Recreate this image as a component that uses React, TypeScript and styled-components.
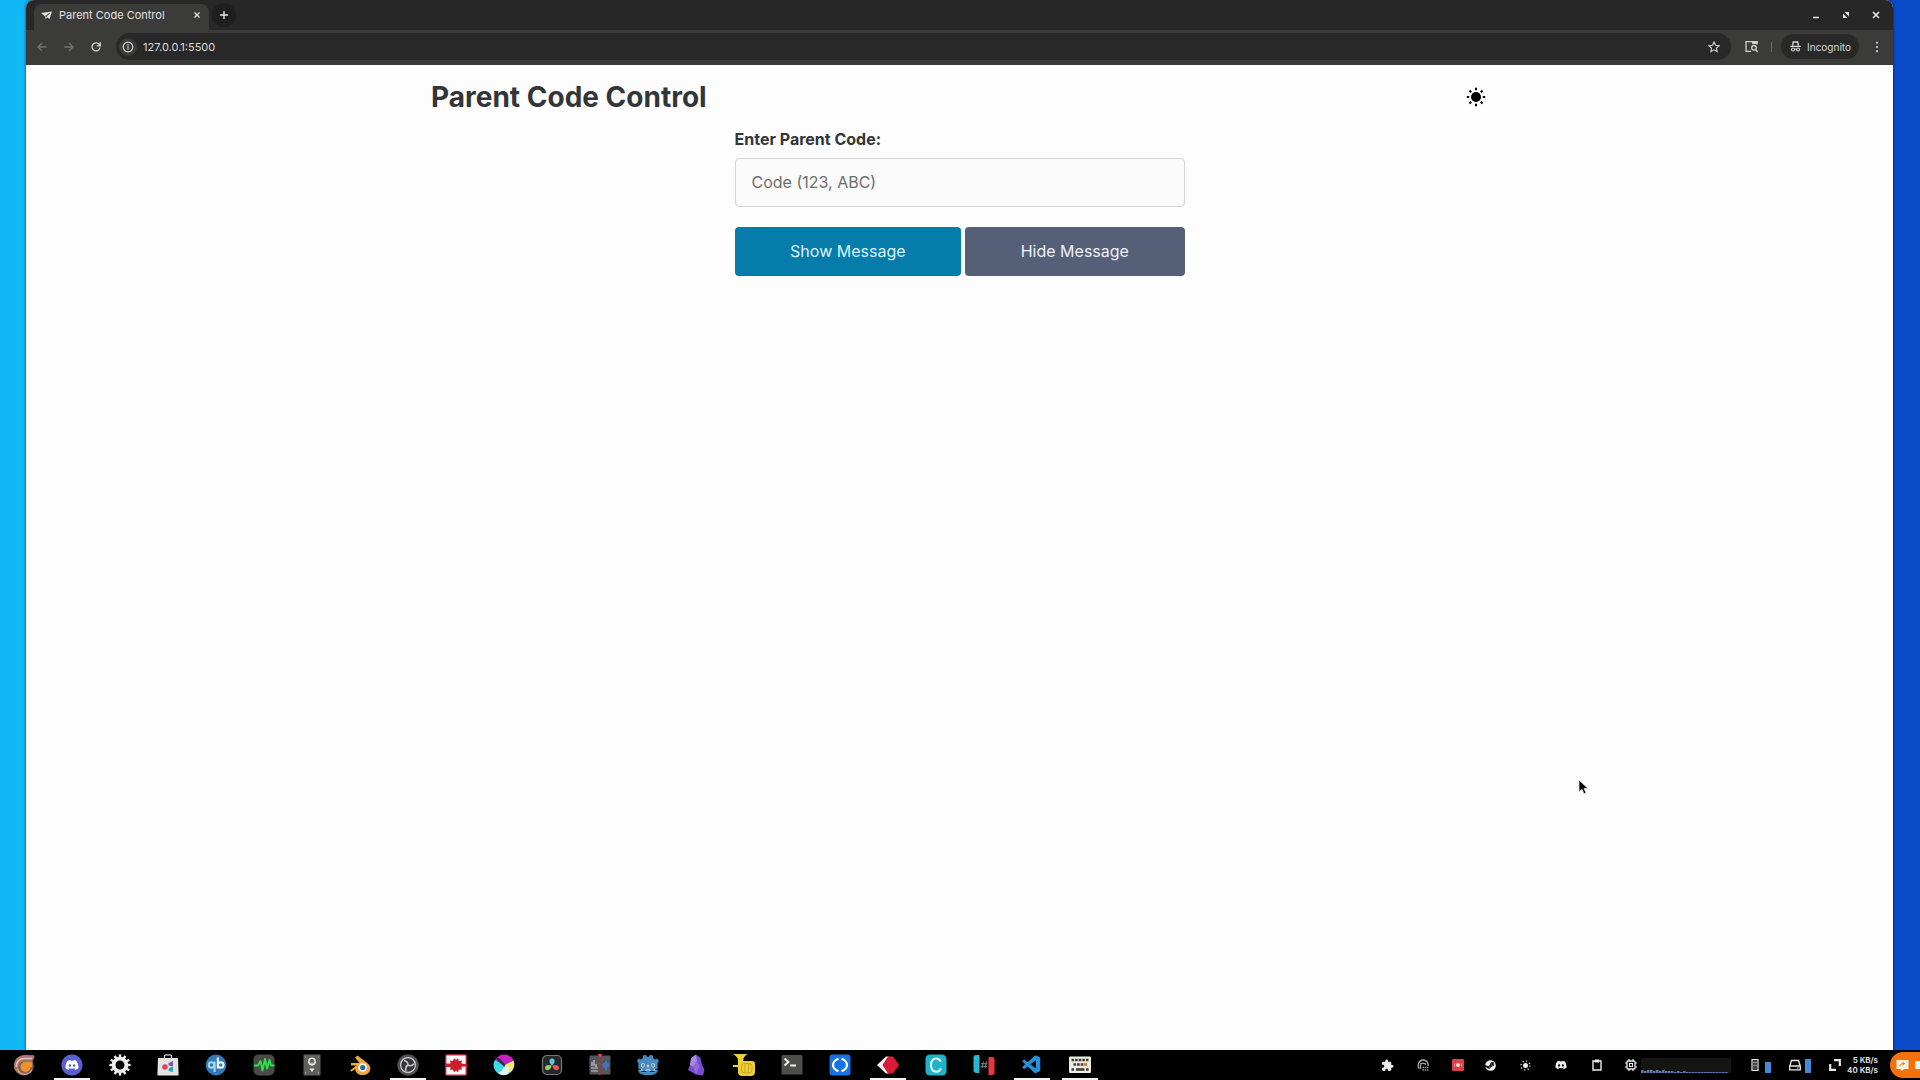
import React, { useState } from "react";
import styled, { createGlobalStyle } from "styled-components";
import { FaDiscord, FaSteam } from "react-icons/fa";
import { MdExtension } from "react-icons/md";
import { SiGodotengine } from "react-icons/si";
import { VscVscode } from "react-icons/vsc";

const GlobalStyle = createGlobalStyle`
  * { box-sizing: border-box; }
  html, body { margin: 0; padding: 0; }
  body { font-family: Inter, Roboto, "Liberation Sans", sans-serif; overflow: hidden; }
  button, input { font-family: inherit; }
  button { border: 0; padding: 0; margin: 0; background: none; cursor: pointer; }
  svg { display: block; flex: none; }
`;

const Desktop = styled.div`
  height: 100vh;
  display: flex;
  flex-direction: column;
  background: linear-gradient(90deg, #12b8f6 0%, #12b8f6 50%, #0a4bca 50%, #0a4bca 100%);
`;

const Workspace = styled.div`
  flex: 1;
  min-height: 0;
  display: flex;
  padding: 0 27px 0 26px;
`;

const BrowserWindow = styled.section`
  flex: 1;
  min-width: 0;
  display: flex;
  flex-direction: column;
  background: #fdfdfd;
  border-radius: 8px 8px 0 0;
  box-shadow: 0 0 3px rgba(0, 0, 0, 0.7);
  overflow: hidden;
`;

const TabStrip = styled.div`
  height: 30px;
  display: flex;
  align-items: flex-end;
  padding-left: 8px;
  background: #272727;
`;

const Tab = styled.div`
  width: 175px;
  height: 26px;
  display: flex;
  align-items: center;
  padding: 0 5px 4px 7px;
  gap: 7px;
  border-radius: 8px 8px 0 0;
  background: #3b3b3a;
  color: #e2e2e2;
  font-size: 11px;
`;

const TabTitle = styled.span`
  flex: 1;
  white-space: nowrap;
`;

const StripButton = styled.button`
  width: 24px;
  height: 24px;
  display: grid;
  place-items: center;
  color: #e6e6e6;
`;

const CloseTab = styled(StripButton)`
  width: 14px;
  height: 14px;
`;

const NewTab = styled(StripButton)`
  margin: 0 0 3px 3px;
  border-radius: 12px;
  background: #1f1f1f;
`;

const WindowControls = styled.div`
  display: flex;
  gap: 6px;
  margin: 0 5px 3px auto;
`;

const Toolbar = styled.div`
  height: 35px;
  display: flex;
  align-items: center;
  gap: 4px;
  padding: 0 5px 2px 4px;
  background: #3b3b3a;
`;

const ToolButton = styled.button`
  width: 23px;
  height: 24px;
  display: grid;
  place-items: center;
  color: ${(p: { $dim?: boolean }) => (p.$dim ? "#737373" : "#d0d0d0")};
`;

const AddressBar = styled.div`
  flex: 1;
  height: 27px;
  display: flex;
  align-items: center;
  gap: 6px;
  margin: 0 5px;
  padding: 0 6px 0 3px;
  border-radius: 14px;
  background: #282828;
`;

const SiteInfo = styled.button`
  width: 18px;
  height: 18px;
  display: grid;
  place-items: center;
  border-radius: 9px;
  background: #3b3b3a;
  color: #d8d8d8;
`;

const AddressInput = styled.input`
  flex: 1;
  padding: 0;
  border: 0;
  outline: 0;
  background: none;
  color: #dcdcdc;
  font-size: 11px;
`;

const Divider = styled.span`
  width: 1px;
  height: 10px;
  margin: 0 5px 0 4px;
  background: #6b6b6b;
`;

const IncognitoChip = styled.button`
  height: 25px;
  display: flex;
  align-items: center;
  gap: 6px;
  margin-right: 2px;
  padding: 0 8px 0 9px;
  border-radius: 13px;
  background: #282828;
  color: #d8d8d8;
  font-size: 10px;
`;

const Page = styled.main`
  flex: 1;
  padding: 14px 24px;
  color: #333639;
`;

const PageHeader = styled.header`
  max-width: 1057px;
  margin: 0 auto;
  display: flex;
  align-items: center;
  justify-content: space-between;
`;

const Title = styled.h1`
  margin: 0;
  font-size: 28px;
  line-height: 36px;
  font-weight: 700;
`;

const ThemeToggle = styled.button`
  width: 24px;
  height: 24px;
  display: grid;
  place-items: center;
  color: #000;
`;

const CodeForm = styled.form`
  max-width: 450px;
  margin: 12px auto 0;
  display: flex;
  flex-direction: column;
`;

const FieldLabel = styled.label`
  font-size: 16px;
  line-height: 24px;
  font-weight: 700;
`;

const CodeField = styled.input`
  height: 49px;
  margin: 7px 0 20px;
  padding: 0 16px 2px;
  border: 1px solid #d5d5d2;
  border-radius: 4px;
  background: #fafafb;
  color: #333639;
  font-size: 16px;
  &::placeholder { color: #6c6f6c; opacity: 1; }
`;

const ButtonRow = styled.div`
  display: flex;
  gap: 4px;
`;

const ActionButton = styled.button`
  flex: 1 1 auto;
  height: 49px;
  padding-bottom: 2px;
  border-radius: 4px;
  background: ${(p: { $secondary?: boolean }) => (p.$secondary ? "#555f78" : "#067caa")};
  color: ${(p: { $secondary?: boolean }) => (p.$secondary ? "#eeeff6" : "#dcf4fc")};
  font-size: 16px;
`;

const Taskbar = styled.footer`
  height: 30px;
  display: flex;
  background: #000;
  color: #e8e8e8;
  overflow: hidden;
`;

const AppButton = styled.button`
  width: 48px;
  height: 30px;
  display: flex;
  flex-direction: column;
  align-items: center;
  justify-content: space-between;
  padding-top: 4px;
  flex: none;
  &::after {
    content: "";
    width: 36px;
    height: 2px;
    background: ${(p: { $running?: boolean }) => (p.$running ? "#f4f4f4" : "transparent")};
  }
`;

const Tray = styled.div`
  margin-left: auto;
  display: flex;
  align-items: center;
`;

const TrayButton = styled.button`
  width: ${(p: { $wide?: boolean }) => (p.$wide ? "36px" : "33px")};
  height: 30px;
  display: grid;
  place-items: center;
  color: #ececec;
`;

const CpuButton = styled(TrayButton)`
  width: 20px;
  margin-left: 6px;
`;

const Meter = styled.div`
  display: flex;
  align-items: center;
  gap: 4px;
  margin-left: 18px;
`;

const MeterTrack = styled.span`
  width: 6px;
  height: 15px;
  display: flex;
  align-items: flex-end;
`;

const MeterFill = styled.span`
  width: 100%;
  background: #4489d6;
`;

const NetSpeed = styled.div`
  width: 33px;
  margin-right: 12px;
  text-align: right;
  font-size: 8px;
  line-height: 10px;
  font-weight: 600;
  white-space: nowrap;
`;

const NotifyPill = styled.button`
  width: 30px;
  height: 26px;
  display: flex;
  align-items: center;
  gap: 6px;
  padding-left: 6px;
  border-radius: 13px 0 0 13px;
  background: #f4720b;
  overflow: hidden;
`;

const Pointer = styled.svg`
  position: absolute;
  left: 1578px;
  top: 779px;
`;

const Icon = ({ size = 22, box = 22, children }: { size?: number; box?: number; children: React.ReactNode }) => (
  <svg width={size} height={size} viewBox={`0 0 ${box} ${box}`} fill="none" aria-hidden="true">
    {children}
  </svg>
);

const gearTeeth = Array.from({ length: 12 }, (_, i) => (
  <rect key={i} x="9.8" y="0.4" width="2.4" height="4" fill="#efefea" transform={`rotate(${(i * 360) / 12} 11 11)`} />
));

type AppEntry = { name: string; running?: boolean; art: React.ReactNode };

const apps: AppEntry[] = [
  {
    name: "Launcher",
    art: (
      <Icon>
        <circle cx="10.800" cy="11.400" r="10" fill="#8a5f52" />
        <path d="M1 12C1 5.500 6 1 12 1l9.500.3c0 4-1.500 6-4.500 6.200H10c-3 .5-5 2.500-5 5.500 0 3 1 5 3 7-4-1-7-4.200-7-8Z" fill="#a8776a" />
        <path d="M3.500 13C3 7.500 7 4.500 11 4.500h8" stroke="#e6c0b0" strokeWidth="1.500" />
        <path d="M4.500 15c1 3 3.500 5 7 5.200 3.500 0 6-1.700 7.500-4.200" stroke="#d8a890" strokeWidth="1.200" />
        <circle cx="12.500" cy="13" r="5" fill="#f0902a" />
        <path d="M12 8h7v5h-5Z" fill="#f0902a" />
      </Icon>
    ),
  },
  {
    name: "Discord",
    running: true,
    art: (
      <Icon>
        <circle cx="11" cy="11" r="10.600" fill="#5b5fd0" />
        <g transform="translate(4 4)"><FaDiscord size={14} color="#fff" /></g>
      </Icon>
    ),
  },
  {
    name: "Settings",
    art: (
      <Icon>
        {gearTeeth}
        <circle cx="11" cy="11" r="6.400" stroke="#efefea" strokeWidth="3.800" />
      </Icon>
    ),
  },
  {
    name: "Software",
    art: (
      <Icon>
        <path d="M7.500 5V2.200c0-1 .5-1.400 1.300-1.400h4.400c.8 0 1.300.4 1.300 1.400V5" stroke="#deded8" strokeWidth="1.300" />
        <path d="M1 4h20l.6 16.500c0 .6-.4 1-1 1H1.400c-.6 0-1-.4-1-1Z" fill="#e6e2e2" />
        <circle cx="8" cy="13" r="2.800" fill="#d94a5c" />
        <path d="m11.500 9 4.500-2v5.500l-4.500-1Z" fill="#7b59b8" />
        <path d="m12 14 4-1.500v5.500l-4.500-1Z" fill="#28a6b4" />
      </Icon>
    ),
  },
  {
    name: "qBittorrent",
    art: (
      <Icon>
        <circle cx="11" cy="11" r="10.400" fill="#3478b8" />
        <circle cx="6.500" cy="11" r="2.800" stroke="#a5d8f4" strokeWidth="2" />
        <path d="M9.600 7.500v10.500" stroke="#a5d8f4" strokeWidth="2" />
        <circle cx="15.700" cy="11" r="2.800" stroke="#f0f8ff" strokeWidth="2" />
        <path d="M12.800 3.500v11" stroke="#f0f8ff" strokeWidth="2" />
      </Icon>
    ),
  },
  {
    name: "System Monitor",
    art: (
      <Icon>
        <rect x=".5" y=".5" width="21" height="21" rx="5" fill="#4a4a46" />
        <path d="M1 11.500h4L7.500 7l2 9.500L12 5l2 9.500L16.500 6l1.500 5.500h3.500" stroke="#2be04e" strokeWidth="1.900" strokeLinejoin="round" />
      </Icon>
    ),
  },
  {
    name: "Audio Device",
    art: (
      <Icon>
        <rect x="2.500" y=".5" width="17" height="21" fill="#5e5e5a" />
        <circle cx="11" cy="7.500" r="3.200" stroke="#e5e5e5" strokeWidth="1.500" />
        <path d="M11 8v4" stroke="#ddd" />
        <path d="m8.500 14.500 5 0-2.500 3.500Z" fill="#f2f2f2" />
        <path d="M4 3h1M17 3h1M4 19h1M17 19h1" stroke="#aaa" />
      </Icon>
    ),
  },
  {
    name: "Blender",
    art: (
      <Icon>
        <path d="M1 16.500 7.500 11.500H2V9h8.500L6 3.500 8.500 1.500l10 7.700c3 2.500 3.800 5.500 1.900 8.500-2 3-7.300 4.500-11 2.500-2-1-3.300-3-3.100-5.300L2.500 17.500Z" fill="#eda83c" />
        <circle cx="13.700" cy="13.500" r="4.400" fill="#f7f4ea" />
        <circle cx="13.700" cy="13.500" r="2.600" fill="#2867ad" />
      </Icon>
    ),
  },
  {
    name: "OBS Studio",
    running: true,
    art: (
      <Icon>
        <circle cx="11" cy="11" r="10.700" fill="#505052" />
        <circle cx="11" cy="11" r="7.400" fill="#37373a" stroke="#d4d4d4" strokeWidth="1.200" />
        {[0, 120, 240].map((a) => (
          <path key={a} d="M11 11C11 8.500 9.500 7 7 6.500" stroke="#cfcfcf" strokeWidth="1.500" transform={`rotate(${a} 11 11)`} />
        ))}
      </Icon>
    ),
  },
  {
    name: "Puzzle",
    art: (
      <Icon>
        <rect x=".8" y=".8" width="20.400" height="20.400" rx="1" fill="#fff" stroke="#c91c2c" strokeWidth="1.200" />
        <path d="M1 9.500h4.500L5 6.500l3 .5 1-3 2 2 2-2 .8 3 3.200-.5-.5 3 4.500.5v2.500l-4.500.3.500 3-3.200-.3-.8 3-2-2-2 2-1-3-3 .5.500-3H1Z" fill="#cc1d2d" />
      </Icon>
    ),
  },
  {
    name: "Krita",
    art: (
      <Icon>
        <path d="M11 11 2 6C4 2.500 7.300.5 11 .5c4.500 0 8 2.500 9.600 6Z" fill="#c71fc0" />
        <path d="m11 11 9.600-4.500c2 5-.4 10-3.600 12.500Z" fill="#f2eb68" />
        <path d="M11 11 17 19c-6 4.500-16 1.500-16.500-8C.5 9 1 7.500 2 6Z" fill="#3ddce8" />
        <path d="M5 19c5-2 5-7 9-6.500 3 .5 3 4.500 1 7.500-3 1.800-7 1.500-10-1Z" fill="#e8f8fa" />
        <path d="M1 2c4 1 8 4 11.500 9L11 12.500C7 9 4 6 1 2Z" fill="#2a3040" />
      </Icon>
    ),
  },
  {
    name: "DaVinci Resolve",
    art: (
      <Icon>
        <rect x="1.500" y="1.500" width="19" height="19" rx="4.500" fill="#25292c" stroke="#777" strokeWidth="1.200" />
        <path d="M11 11.500C7.500 9 7.500 5 11 4.300c3.500.7 3.500 4.700 0 7.200Z" fill="#58c8d8" />
        <path d="M10.600 11.600c-.4 4.400-4.400 6-6.400 3.400-1-3.300 2.500-5 6.400-3.400Z" fill="#9bd05a" />
        <path d="M11.400 11.600c.4 4.400 4.400 6 6.400 3.400 1-3.300-2.500-5-6.400-3.400Z" fill="#e8555a" />
      </Icon>
    ),
  },
  {
    name: "Audio Editor",
    art: (
      <Icon>
        <rect x=".5" y="1.500" width="21" height="19" rx="1" fill="#55565c" />
        <path d="M2 14h7M2 17h7M3 8v4M5 6v6M7 10v3" stroke="#c0c4cc" strokeWidth="1.200" />
        <path d="M11 0v21" stroke="#a63438" strokeWidth="1.500" />
        <path d="M8.500 0h5L11 3.500Z" fill="#e04a44" />
        <path d="M13 11h1M15 9v5M17 7v9M19 9v4" stroke="#3c78c8" strokeWidth="1.700" />
      </Icon>
    ),
  },
  { name: "Godot", art: <Icon><rect x="4" y="9" width="14" height="8" fill="#e8f4fa" /><SiGodotengine size={22} color="#478cbf" /></Icon> },
  {
    name: "Obsidian",
    art: (
      <Icon>
        <path d="M11 .5 6 4.500 5 11l-2 5 8 4.500 7 1 1.500-6-2.500-4.500L15.500 4Z" fill="#7a4bd0" />
        <path d="M11 .5 6 4.500 5 11l3 2 4-6Z" fill="#a68be0" />
        <path d="m12 7 2.500 5-3.500 8.500-3-7.500Z" fill="#8f6ade" />
      </Icon>
    ),
  },
  {
    name: "Horn",
    art: (
      <Icon>
        <path d="M0 0h14.500c-3 2-4.500 4-4.500 7h9c2 0 3 1 3 3v8c0 3-2 4-4 4H9c-3 0-4-2-4-4v-5H0v-2h5V6C5 3.500 2.500 1.500 0 0Z" fill="#ead036" />
        <rect x="8.500" y="9.500" width="10.500" height="9.500" rx="3" stroke="#c4a51c" />
        <path d="M12 10v9M15.500 10v9" stroke="#c4a51c" />
      </Icon>
    ),
  },
  {
    name: "Terminal",
    art: (
      <Icon>
        <rect x=".5" y="1" width="21" height="19.500" rx="1.500" fill="#4d4d4c" />
        <path d="m3.500 4.500 4 3.500-4 3.500M9 11.500h6" stroke="#f4f4f4" strokeWidth="1.800" />
      </Icon>
    ),
  },
  {
    name: "Code Brackets",
    art: (
      <Icon>
        <rect x=".5" y=".5" width="21" height="21" rx="3" fill="#1673e0" />
        <path d="M9.500 4.800C6 6 4 8.500 4 11s2 5 5.500 6.200M12.500 4.800C16 6 18 8.500 18 11s-2 5-5.500 6.200" stroke="#fff" strokeWidth="2.200" />
      </Icon>
    ),
  },
  {
    name: "Red Diamond",
    running: true,
    art: (
      <Icon>
        <path d="m9 2.500-9 8.500 9 8.500h3l-6-8.500 6-8.500Z" fill="#f6f2f2" />
        <path d="M11 2.500h5l6 8.500-6 8.500h-5L5.500 11Z" fill="#d81c36" />
      </Icon>
    ),
  },
  {
    name: "C Editor",
    art: (
      <Icon>
        <rect x=".5" y=".5" width="21" height="21" rx="4.500" fill="#20b2c8" />
        <path d="M15.800 7.500C14.800 5.400 13.300 4.400 11.300 4.400c-3.300 0-5.300 2.700-5.300 6.700 0 4 2 6.600 5.300 6.600 2.200 0 3.800-1.200 4.500-3.300" stroke="#eafafa" strokeWidth="2" />
      </Icon>
    ),
  },
  {
    name: "Hash",
    art: (
      <Icon>
        <path d="M6.500 1v18H3.500C1.500 19 .5 18 .5 16.500V3.500C.5 2 1.500 1 3 1Z" fill="#28b6cc" />
        <path d="M15.500 3H19c1.500 0 2.500 1 2.500 2.500v13c0 1.500-1 2.500-2.500 2.500h-3.500Z" fill="#e8383e" />
        <path d="m10.500 7.500-1.500 7M13.500 7.500 12 14.500M8 9.700h6.500M7.500 12.300H14" stroke="#8c8c8c" strokeWidth=".9" />
      </Icon>
    ),
  },
  { name: "Visual Studio Code", running: true, art: <VscVscode size={22} color="#2492d8" /> },
  {
    name: "On-screen Keyboard",
    running: true,
    art: (
      <Icon>
        <rect x="0" y="2.500" width="22" height="16.500" rx="1" fill="#efece2" />
        <path d="M2.500 6h17M4.500 10.500h14M2.500 15.500h3M17 15.500h3" stroke="#403d3a" strokeWidth="2.600" strokeDasharray="2.600 1" />
        <path d="M7 15.500h8.500" stroke="#403d3a" strokeWidth="2.600" />
        <rect x="14.500" y="9" width="3" height="3" fill="#e9862e" />
      </Icon>
    ),
  },
];

const cpuHistory = [3, 2, 3, 3, 2, 3, 2, 3, 2, 2, 2, 1, 2, 1, 2, 1, 1, 1, 1, 1, 1, 1, 1, 1, 1, 1, 1, 1, 1];

export default function App() {
  const [code, setCode] = useState("");
  return (
    <Desktop>
      <GlobalStyle />
      <Workspace>
        <BrowserWindow>
          <TabStrip>
            <Tab>
              <Icon size={11} box={11}>
                <path d="M0 3 11 1.500 8.500 9 6 7.300 4.700 9.300 4 6.300Z" fill="currentColor" />
                <path d="M4 6.300 8.500 3.300 4.700 7.500" stroke="#3b3b3a" strokeWidth=".7" />
              </Icon>
              <TabTitle>Parent Code Control</TabTitle>
              <CloseTab aria-label="Close tab">
                <Icon size={8} box={8}><path d="m1.500 1.500 5 5m0-5-5 5" stroke="currentColor" strokeWidth="1.300" /></Icon>
              </CloseTab>
            </Tab>
            <NewTab aria-label="New tab">
              <Icon size={10} box={10}><path d="M5 1v8M1 5h8" stroke="currentColor" strokeWidth="1.400" /></Icon>
            </NewTab>
            <WindowControls>
              <StripButton aria-label="Minimize">
                <Icon size={8} box={8}><path d="M1 6.500h6" stroke="currentColor" strokeWidth="1.500" /></Icon>
              </StripButton>
              <StripButton aria-label="Restore">
                <Icon size={8} box={8}><path d="M2.500 1H7v4.500L2.500 1ZM1 2.500 5.500 7H1V2.500Z" fill="currentColor" /></Icon>
              </StripButton>
              <StripButton aria-label="Close">
                <Icon size={8} box={8}><path d="m1 1 6 6m0-6L1 7" stroke="currentColor" strokeWidth="1.700" /></Icon>
              </StripButton>
            </WindowControls>
          </TabStrip>
          <Toolbar>
            <ToolButton $dim aria-label="Back">
              <Icon size={10} box={10}><path d="M9.500 5H1m4-4L1 5l4 4" stroke="currentColor" strokeWidth="1.300" /></Icon>
            </ToolButton>
            <ToolButton $dim aria-label="Forward">
              <Icon size={10} box={10}><path d="M.5 5H9M5 1l4 4-4 4" stroke="currentColor" strokeWidth="1.300" /></Icon>
            </ToolButton>
            <ToolButton aria-label="Reload">
              <Icon size={10} box={10}><path d="M9 5.500A4 4 0 1 1 8 2.200L9 3.300M9.300.3v3.500H5.800" stroke="currentColor" strokeWidth="1.300" /></Icon>
            </ToolButton>
            <AddressBar>
              <SiteInfo aria-label="Site information">
                <Icon size={12} box={12}>
                  <circle cx="6" cy="6" r="4.800" stroke="currentColor" strokeWidth="1.200" />
                  <path d="M6 5.300v3.200M6 3.200v1.200" stroke="currentColor" strokeWidth="1.200" />
                </Icon>
              </SiteInfo>
              <AddressInput aria-label="Address" defaultValue="127.0.0.1:5500" />
              <ToolButton aria-label="Bookmark">
                <Icon size={12} box={12}><path d="m6 1 1.500 3.300 3.700.4-2.800 2.400.8 3.600L6 8.800l-3.200 1.900.8-3.600L.8 4.700l3.700-.4L6 1Z" stroke="currentColor" strokeWidth="1.100" /></Icon>
              </ToolButton>
            </AddressBar>
            <ToolButton aria-label="Search side panel">
              <Icon size={13} box={13}>
                <path d="M6 11.400H1V1.600h11v3" stroke="currentColor" strokeWidth="1.300" />
                <path d="M7 1h5.500v3H7Z" fill="currentColor" />
                <circle cx="9" cy="7.800" r="2.300" stroke="currentColor" strokeWidth="1.300" />
                <path d="m10.500 9.500 2.200 2.500" stroke="currentColor" strokeWidth="1.300" />
              </Icon>
            </ToolButton>
            <Divider />
            <IncognitoChip>
              <Icon size={11} box={11}>
                <path d="M2.500 4.500 3.300 1h4.400l.8 3.500M.3 5.400h10.400" stroke="currentColor" strokeWidth="1.300" />
                <circle cx="3" cy="8.500" r="1.500" stroke="currentColor" strokeWidth="1.100" />
                <circle cx="8" cy="8.500" r="1.500" stroke="currentColor" strokeWidth="1.100" />
                <path d="M4.500 8.200h2" stroke="currentColor" />
              </Icon>
              Incognito
            </IncognitoChip>
            <ToolButton aria-label="Menu">
              <Icon size={12} box={12}>
                <circle cx="6" cy="1.800" r="1.100" fill="currentColor" />
                <circle cx="6" cy="6" r="1.100" fill="currentColor" />
                <circle cx="6" cy="10.200" r="1.100" fill="currentColor" />
              </Icon>
            </ToolButton>
          </Toolbar>
          <Page>
            <PageHeader>
              <Title>Parent Code Control</Title>
              <ThemeToggle aria-label="Toggle theme">
                <Icon size={20} box={20}>
                  <circle cx="10" cy="10" r="5" fill="currentColor" />
                  {[0, 45, 90, 135, 180, 225, 270, 315].map((a) => (
                    <path key={a} d="M10 .8v2.400" stroke="currentColor" strokeWidth="2" transform={`rotate(${a} 10 10)`} />
                  ))}
                </Icon>
              </ThemeToggle>
            </PageHeader>
            <CodeForm onSubmit={(e) => e.preventDefault()}>
              <FieldLabel htmlFor="parent-code">Enter Parent Code:</FieldLabel>
              <CodeField id="parent-code" placeholder="Code (123, ABC)" value={code} onChange={(e) => setCode(e.target.value)} />
              <ButtonRow>
                <ActionButton type="submit">Show Message</ActionButton>
                <ActionButton type="button" $secondary>Hide Message</ActionButton>
              </ButtonRow>
            </CodeForm>
          </Page>
        </BrowserWindow>
      </Workspace>
      <Taskbar>
        {apps.map((app) => (
          <AppButton key={app.name} aria-label={app.name} $running={app.running}>{app.art}</AppButton>
        ))}
        <Tray>
          <TrayButton $wide aria-label="Extensions"><MdExtension size={13} /></TrayButton>
          <TrayButton $wide aria-label="Headset">
            <Icon size={12} box={12}>
              <path d="M2 9.500C0 6 2 1 6 1s5.500 3 5 6M3.500 6v4M3 5.500C4.500 4 7.500 4 9 5.500" stroke="#aaa" strokeWidth="1.300" />
              <path d="M5.500 8.500h6M5.500 11h6" stroke="#8f97bb" strokeDasharray="1.500 .7" strokeWidth="1.500" />
            </Icon>
          </TrayButton>
          <TrayButton aria-label="Recorder">
            <Icon size={12} box={12}>
              <rect width="12" height="12" rx="1" fill="#dc4049" />
              <circle cx="6" cy="6" r="2" fill="#ffe0dc" />
              <path d="M2.500 4.500v3M9.500 4.500v3" stroke="#f0a0a0" />
            </Icon>
          </TrayButton>
          <TrayButton aria-label="Steam"><FaSteam size={11} /></TrayButton>
          <TrayButton $wide aria-label="Brightness">
            <Icon size={11} box={11}>
              <circle cx="5.500" cy="5.500" r="2.500" fill="currentColor" />
              <circle cx="5.500" cy="5.500" r="4.500" stroke="currentColor" strokeDasharray="1.200 2.330" strokeWidth="1.200" />
            </Icon>
          </TrayButton>
          <TrayButton $wide aria-label="Discord status"><FaDiscord size={12} /></TrayButton>
          <TrayButton $wide aria-label="Clipboard">
            <Icon size={12} box={12}>
              <path d="M2 2h8v9H2Z" stroke="currentColor" strokeWidth="1.400" />
              <path d="M4 .5h4v3H4Z" fill="currentColor" />
            </Icon>
          </TrayButton>
          <CpuButton aria-label="Processor">
            <Icon size={12} box={12}>
              <rect x="2" y="2" width="8" height="8" rx="1" stroke="currentColor" strokeWidth="1.300" />
              <rect x="4.500" y="4.500" width="3" height="3" stroke="currentColor" />
              <path d="M4 0v2M8 0v2M4 10v2M8 10v2M0 4h2M0 8h2M10 4h2M10 8h2" stroke="currentColor" strokeWidth="1.200" />
            </Icon>
          </CpuButton>
          <svg width="90" height="15" viewBox="0 0 90 15" role="img" aria-label="CPU history">
            <rect width="90" height="15" fill="#151612" />
            {cpuHistory.map((v, i) => <rect key={i} x={i * 3} y={15 - v} width="2.500" height={v} fill="#587fb0" />)}
          </svg>
          <Meter>
            <Icon size={12} box={12}>
              <path d="M3 .7h6v10.600H3Z" stroke="currentColor" strokeWidth="1.200" />
              <path d="M5 2.500v7M7 2.500v7" stroke="currentColor" strokeDasharray="2 1" strokeWidth="1.200" />
            </Icon>
            <MeterTrack><MeterFill style={{ height: "67%" }} /></MeterTrack>
          </Meter>
          <Meter>
            <Icon size={12} box={12}>
              <path d="M.7 7 2.500 1.500h7L11.300 7v3.800H.7V7h10.600" stroke="currentColor" strokeWidth="1.300" />
              <path d="M8 9h1.500" stroke="currentColor" />
            </Icon>
            <MeterTrack><MeterFill style={{ height: "87%" }} /></MeterTrack>
          </Meter>
          <Meter>
            <Icon size={12} box={12}>
              <path d="M5 1.200h5.800V7M1.200 5v5.800H7" stroke="currentColor" strokeWidth="2.200" />
            </Icon>
            <NetSpeed>5 KB/s<br />40 KB/s</NetSpeed>
          </Meter>
          <NotifyPill aria-label="Notifications">
            <Icon size={13} box={13}>
              <path d="M.5 1h12v9H8l-2 2-2-2H.5Z" fill="#fff0dc" />
              <path d="M4 7.500c0-2 1-3 4-3M6.500 3 8.500 4.500 6.500 6" stroke="#f4720b" />
            </Icon>
            <Icon size={10} box={10}><rect y="1" width="8" height="8" rx="1" fill="#fff0dc" /></Icon>
          </NotifyPill>
        </Tray>
      </Taskbar>
      <Pointer width="11" height="16" viewBox="0 0 11 16" aria-hidden="true">
        <path d="M1 1v12l3-2.700 2 4.500 2-1-2-4.200h4Z" fill="#000" stroke="#ddd" strokeWidth=".8" />
      </Pointer>
    </Desktop>
  );
}
